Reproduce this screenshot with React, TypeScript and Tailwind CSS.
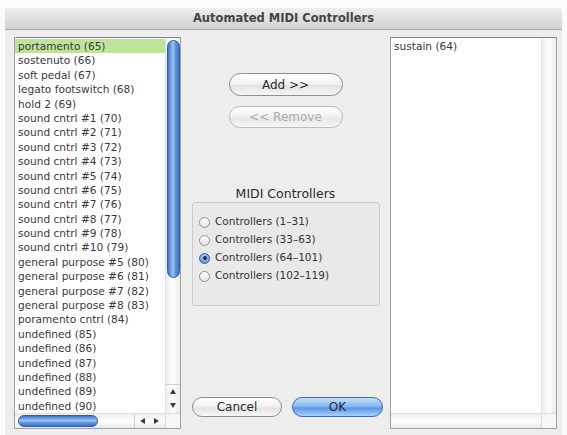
import { useState } from "react";

const controllers = [
  "portamento (65)",
  "sostenuto (66)",
  "soft pedal (67)",
  "legato footswitch (68)",
  "hold 2 (69)",
  "sound cntrl #1 (70)",
  "sound cntrl #2 (71)",
  "sound cntrl #3 (72)",
  "sound cntrl #4 (73)",
  "sound cntrl #5 (74)",
  "sound cntrl #6 (75)",
  "sound cntrl #7 (76)",
  "sound cntrl #8 (77)",
  "sound cntrl #9 (78)",
  "sound cntrl #10 (79)",
  "general purpose #5 (80)",
  "general purpose #6 (81)",
  "general purpose #7 (82)",
  "general purpose #8 (83)",
  "poramento cntrl (84)",
  "undefined (85)",
  "undefined (86)",
  "undefined (87)",
  "undefined (88)",
  "undefined (89)",
  "undefined (90)",
];

const ranges = [
  "Controllers (1–31)",
  "Controllers (33–63)",
  "Controllers (64–101)",
  "Controllers (102–119)",
];

function Arrow({ dir }: { dir: "up" | "down" | "left" | "right" }) {
  const pts = {
    up: "3,0 6,5 0,5",
    down: "0,0 6,0 3,5",
    left: "5,0 5,6 0,3",
    right: "0,0 5,3 0,6",
  }[dir];
  const vertical = dir === "up" || dir === "down";
  return (
    <svg width={vertical ? 6 : 5} height={vertical ? 5 : 6} viewBox={vertical ? "0 0 6 5" : "0 0 5 6"}>
      <polygon points={pts} fill="#3c3c3c" />
    </svg>
  );
}

function ScrollList({ items, selected, thumb }: { items: string[]; selected?: number; thumb: boolean }) {
  return (
    <div className="flex h-[392px] w-[167px] flex-col border border-[#a0a0a0] border-t-[#858585] bg-white">
      <div className="flex min-h-0 flex-1">
        <div className="flex-1 overflow-hidden pt-[1px]">
          {items.map((it, i) => (
            <div
              key={it}
              className={
                "h-[14.4px] whitespace-nowrap pl-[3px] text-[10.6px] leading-[14.4px] text-[#3a3a3a] " +
                (i === selected ? "bg-[#bde49a]" : "")
              }
            >
              {it}
            </div>
          ))}
        </div>
        <div className="flex w-[15px] flex-col border-l border-[#e0e0e0] bg-[linear-gradient(90deg,#efefef,#fdfdfd_50%,#ebebeb)]">
          {thumb ? (
            <div className="mx-auto mt-[2px] h-[238px] w-[13px] rounded-full border border-[#2e5fa8] bg-[linear-gradient(90deg,#3f74c6,#9cc4f3_45%,#5d93dd_70%,#3d6fc0)]" />
          ) : null}
          <div className="flex-1" />
          {thumb ? (
            <div className="flex flex-col items-center gap-[9px] border-t border-[#cfcfcf] pb-[5px] pt-[4px]">
              <Arrow dir="up" />
              <Arrow dir="down" />
            </div>
          ) : null}
        </div>
      </div>
      <div className="flex h-[15px] border-t border-[#e0e0e0] bg-[linear-gradient(180deg,#efefef,#fdfdfd_50%,#ebebeb)]">
        {thumb ? (
          <>
            <div className="ml-[3px] mt-[1px] h-[12px] w-[80px] rounded-full border border-[#2e5fa8] bg-[linear-gradient(180deg,#3f74c6,#9cc4f3_45%,#5d93dd_70%,#3d6fc0)]" />
            <div className="flex-1" />
            <div className="flex items-center gap-[9px] border-l border-[#cfcfcf] pl-[5px] pr-[6px]">
              <Arrow dir="left" />
              <Arrow dir="right" />
            </div>
            <div className="w-[15px] border-l border-[#e0e0e0] bg-[#f6f6f6]" />
          </>
        ) : (
          <>
            <div className="flex-1" />
            <div className="w-[15px] border-l border-[#e0e0e0] bg-[#f6f6f6]" />
          </>
        )}
      </div>
    </div>
  );
}

function PillButton({ label, disabled, primary, className }: { label: string; disabled?: boolean; primary?: boolean; className: string }) {
  return (
    <button
      className={
        "rounded-full border text-[12px] leading-none " +
        className +
        (primary
          ? " border-[#3a6cb8] bg-[linear-gradient(180deg,#c8e0fb,#7fb1ee_50%,#5a97e6_55%,#a9d0fa)] text-[#1d2a3a]"
          : disabled
            ? " border-[#bcbcbc] bg-[linear-gradient(180deg,#ffffff,#f1f1f1_50%,#e6e6e6_55%,#f6f6f6)] text-[#aaaaaa]"
            : " border-[#8e8e8e] bg-[linear-gradient(180deg,#ffffff,#f1f1f1_50%,#e2e2e2_55%,#f6f6f6)] text-[#2a2a2a]")
      }
    >
      {label}
    </button>
  );
}

export default function App() {
  const [range, setRange] = useState(2);

  return (
    <div className="h-[435px] w-[567px] bg-[#fbfbfb] pl-[5px] pt-[8px] font-['DejaVu_Sans',sans-serif]">
      <div className="flex h-[427px] w-[557px] flex-col bg-[#ededed]">
        <div className="flex h-[22px] items-center justify-center border-b border-[#a9a9a9] bg-[linear-gradient(180deg,#eeeeee,#d2d2d2)] text-[11.5px] font-bold text-[#454545]">
          Automated MIDI Controllers
        </div>

        <div className="flex flex-1 pl-[9px] pt-[7px]">
          <ScrollList items={controllers} selected={0} thumb />

          <div className="flex w-[209px] flex-col pt-[36px]">
            <PillButton label="Add >>" className="mx-auto h-[23px] w-[114px]" />
            <PillButton label="<< Remove" disabled className="mx-auto mt-[10px] h-[22px] w-[114px]" />

            <div className="mt-[59px] text-center text-[12.5px] leading-[13px] text-[#2a2a2a]">MIDI Controllers</div>
            <div className="ml-[11px] mt-[2px] h-[104px] w-[188px] rounded-[3px] border border-[#cccccc] bg-[#e9e9e9] pl-[6px] pt-[10px]">
              {ranges.map((r, i) => (
                <div key={r} className="flex h-[18px] cursor-default items-center gap-[5px]" onClick={() => setRange(i)}>
                  <span
                    className={
                      "flex h-[11px] w-[11px] items-center justify-center rounded-full border " +
                      (i === range
                        ? "border-[#2f5a9c] bg-[radial-gradient(circle_at_50%_35%,#b8d6f8,#4f86d6)]"
                        : "border-[#8f8f8f] bg-[linear-gradient(180deg,#ffffff,#e4e4e4)]")
                    }
                  >
                    {i === range ? <span className="h-[4px] w-[4px] rounded-full bg-[#1c2e4a]" /> : null}
                  </span>
                  <span className="text-[10.5px] text-[#333]">{r}</span>
                </div>
              ))}
            </div>

            <div className="ml-[11px] mt-auto flex gap-[10px] pb-[18px]">
              <PillButton label="Cancel" className="h-[20px] w-[90px]" />
              <PillButton label="OK" primary className="h-[20px] w-[91px]" />
            </div>
          </div>

          <ScrollList items={["sustain (64)"]} thumb={false} />
        </div>
      </div>
    </div>
  );
}
